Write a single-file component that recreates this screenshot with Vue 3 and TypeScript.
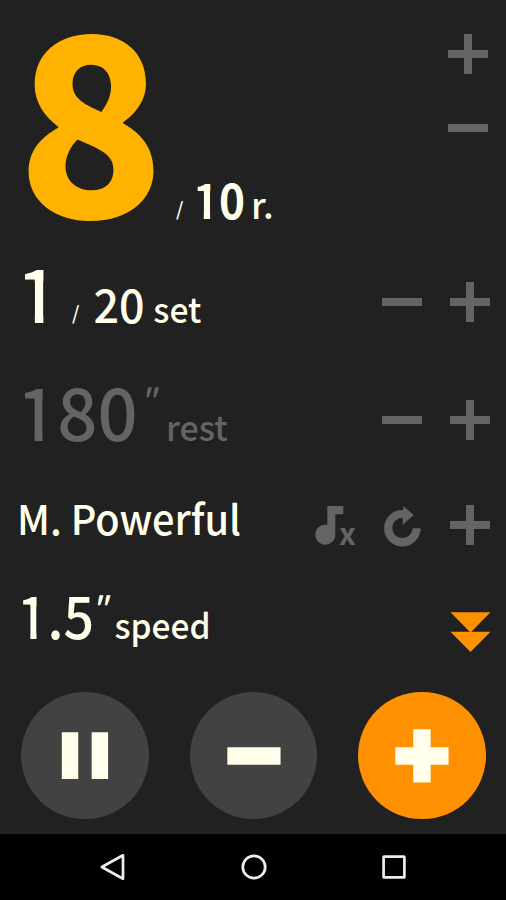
<script setup lang="ts">
import { ref } from 'vue'

const reps = ref<number>(8)
const totalReps = ref<number>(10)
const currentSet = ref<number>(1)
const totalSets = ref<number>(20)
const rest = ref<number>(180)
const speed = ref<string>('1.5')
const sound = ref<string>('M. Powerful')

// The leading "1" is drawn in its own span so that its foot can be trimmed.
const head = (v: number | string): string => (String(v).startsWith('1') ? '1' : '')
const tail = (v: number | string): string => String(v).slice(head(v).length)
</script>

<template>
  <main class="screen">
    <section class="row reps">
      <div class="reading">
        <span class="count">{{ reps }}</span>
        <span class="slash">/</span>
        <span class="total"><i class="one">{{ head(totalReps) }}</i>{{ tail(totalReps) }}</span>
        <span class="unit">r.</span>
      </div>
      <div class="controls stacked">
        <button class="ctl" aria-label="Increase"><svg viewBox="0 0 40 40"><path d="M16 0h8v16h16v8H24v16h-8V24H0v-8h16z" /></svg></button>
        <button class="ctl" aria-label="Decrease"><svg viewBox="0 0 40 40"><path d="M0 16h40v8H0z" /></svg></button>
      </div>
    </section>

    <section class="row sets">
      <div class="reading">
        <span class="count"><i class="one">{{ head(currentSet) }}</i>{{ tail(currentSet) }}</span>
        <span class="slash">/</span>
        <span class="total">{{ totalSets }}</span>
        <span class="unit">set</span>
      </div>
      <div class="controls">
        <button class="ctl" aria-label="Decrease"><svg viewBox="0 0 40 40"><path d="M0 16h40v8H0z" /></svg></button>
        <button class="ctl" aria-label="Increase"><svg viewBox="0 0 40 40"><path d="M16 0h8v16h16v8H24v16h-8V24H0v-8h16z" /></svg></button>
      </div>
    </section>

    <section class="row rest">
      <div class="reading">
        <span class="count"><i class="one">{{ head(rest) }}</i>{{ tail(rest) }}</span>
        <span class="prime">"</span>
        <span class="unit">rest</span>
      </div>
      <div class="controls">
        <button class="ctl" aria-label="Decrease"><svg viewBox="0 0 40 40"><path d="M0 16h40v8H0z" /></svg></button>
        <button class="ctl" aria-label="Increase"><svg viewBox="0 0 40 40"><path d="M16 0h8v16h16v8H24v16h-8V24H0v-8h16z" /></svg></button>
      </div>
    </section>

    <section class="row sound">
      <div class="reading"><span class="name">{{ sound }}</span></div>
      <div class="controls">
        <button class="ctl" aria-label="Mute">
          <svg viewBox="0 0 40 40"><path d="M13.3 1h16v8.3h-8v20.4a10 10 0 1 1-8-9.8z" /><text class="mark" x="25" y="40">x</text></svg>
        </button>
        <button class="ctl" aria-label="Repeat">
          <svg viewBox="0 0 40 40"><path d="M21.3 1l10.4 9-11 9.7v-7A10.2 10.2 0 1 0 30.7 23.3h8A18.3 18.3 0 1 1 21.3 4.9z" /></svg>
        </button>
        <button class="ctl" aria-label="Add"><svg viewBox="0 0 40 40"><path d="M16 0h8v16h16v8H24v16h-8V24H0v-8h16z" /></svg></button>
      </div>
    </section>

    <section class="row speed">
      <div class="reading">
        <span class="count"><i class="one">{{ head(speed) }}</i>{{ tail(speed) }}</span>
        <span class="prime">"</span>
        <span class="unit">speed</span>
      </div>
      <div class="controls">
        <button class="ctl accent" aria-label="More"><svg viewBox="0 0 40 40"><path d="M.5.3h40L21.3 19.8h19.2L20.5 40 .5 19.8h19.2z" /></svg></button>
      </div>
    </section>

    <section class="actions">
      <button class="round" aria-label="Pause"><svg viewBox="0 0 128 128"><path d="M41 40.5h16.5v47H41zM71 40.5h16.5v47H71z" /></svg></button>
      <button class="round" aria-label="Minus"><svg viewBox="0 0 128 128"><path d="M37.5 55.5H91V73H37.5z" /></svg></button>
      <button class="round primary" aria-label="Plus"><svg viewBox="0 0 128 128"><path d="M55.5 37.5H73v18h18V73H73v18H55.5V73h-18V55.5h18z" /></svg></button>
    </section>

    <nav class="navbar">
      <svg viewBox="0 0 28 28"><path d="M24 2.3v23.4L2.8 14z" /></svg>
      <svg viewBox="0 0 28 28"><circle cx="14" cy="14" r="11.2" /></svg>
      <svg viewBox="0 0 28 28"><rect x="3.6" y="3.6" width="20.8" height="20.8" rx=".5" /></svg>
    </nav>
  </main>
</template>

<style>
body {
  margin: 0;
  background: #212121;
}
</style>

<style scoped>
.screen {
  width: 506px;
  height: 900px;
  overflow: hidden;
  background: #212121;
  color: #ffffeb;
  font-family: "Noto Sans CJK JP", "Noto Sans", sans-serif;
  font-weight: 500;
}
section,
nav {
  box-sizing: border-box;
}
button {
  padding: 0;
  border: 0;
  background: none;
  color: inherit;
  font-family: inherit;
}
svg {
  display: block;
  width: 100%;
  height: 100%;
  overflow: visible;
  fill: currentColor;
}
.row {
  display: flex;
  align-items: flex-start;
  justify-content: space-between;
  padding: 0 16px 0 17px;
}
/* The empty strut fixes the distance from the row's top to its baseline. */
.reading {
  display: flex;
  align-items: baseline;
  white-space: nowrap;
}
.reading::before {
  content: "";
  width: 0;
  height: var(--baseline);
}
.reading span {
  display: block;
  line-height: 0;
  transform-origin: 0 50%;
}
.one {
  display: inline-block;
  line-height: 1;
  font-style: normal;
  clip-path: polygon(0 0, 1em 0, 1em 0.37em, 0.363em 0.37em, 0.363em 1em, 0.248em 1em, 0.248em 0.37em, 0 0.37em);
}
.reading .slash {
  width: 20px;
  font-size: 19px;
  transform: translateY(-3px);
}
.reading .prime {
  font-style: italic;
  font-size: 32px;
}
.controls {
  display: flex;
  gap: 28px;
}
.ctl {
  width: 40px;
  height: 40px;
  color: #646464;
}
.mark {
  font-size: 30px;
  font-weight: 700;
}
.accent {
  color: #ff9100;
}

.reps { --baseline: 218.5px; height: 250px; padding-right: 18px; }
.reps .count { width: 159px; font-size: 248px; font-weight: 900; color: #ffb300; transform: translateY(-1px) scaleX(0.978); }
.reps .total { width: 55px; font-size: 49px; font-weight: 700; transform: translateX(-3px) scaleX(0.9); }
.reps .one { clip-path: polygon(0 0, 1em 0, 1em 0.38em, 0.388em 0.38em, 0.388em 1em, 0.244em 1em, 0.244em 0.38em, 0 0.38em); }
.reps .unit { font-size: 36px; }
.stacked { flex-direction: column; gap: 34px; padding-top: 34px; }

.sets { --baseline: 73px; height: 120px; }
.sets .count { width: 55px; font-size: 74px; transform: translateX(-0.5px); }
.sets .total { width: 60px; font-size: 46px; transform: translateX(1.5px) scaleX(0.975); }
.sets .unit { font-size: 35px; transform: translateX(1.3px) scaleX(0.96); }
.sets .controls { padding-top: 32px; }

.rest { --baseline: 71px; height: 110px; }
.rest .reading { color: #646464; }
.rest .count { width: 127px; font-size: 73px; transform: scaleX(0.966); }
.rest .prime { width: 21px; transform: translate(-5px, -29px); }
.rest .unit { font-size: 35px; transform: translateX(1px) scaleX(0.97); }
.rest .controls { padding-top: 30px; }

.sound { --baseline: 55px; height: 100px; }
.sound .name { font-size: 41px; transform: scaleX(0.967); }
.sound .controls { padding-top: 25px; }

.speed { --baseline: 59px; height: 100px; }
.speed .count { width: 79px; font-size: 58px; transform: scaleX(0.926); }
.speed .prime { width: 18px; transform: translate(-5.5px, -19.5px); }
.speed .unit { font-size: 35px; transform: translateX(0.5px) scaleX(0.955); }
.speed .controls { padding-top: 32px; }

.actions {
  display: flex;
  justify-content: space-between;
  height: 153.5px;
  padding: 12px 20.3px 0 21.3px;
}
.round {
  width: 127.4px;
  height: 127.4px;
  border-radius: 50%;
  background: #424242;
}
.primary {
  background: #ff9100;
}
.navbar {
  display: flex;
  justify-content: center;
  gap: 112.5px;
  height: 66.5px;
  padding: 19px 0 0 1px;
  background: #000;
}
.navbar svg {
  width: 28px;
  height: 28px;
  fill: none;
  stroke: #eee;
  stroke-width: 2.7;
  stroke-linejoin: round;
}
</style>
